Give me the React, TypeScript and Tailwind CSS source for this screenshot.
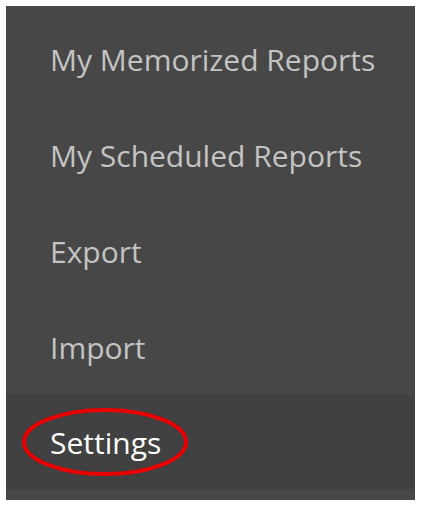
import React from 'react';

const items = ['My Memorized Reports', 'My Scheduled Reports', 'Export', 'Import'];

export default function App() {
  return (
    <div className="w-[423px] h-[508px] bg-white pt-[6px] pl-[6px]" style={{ fontFamily: '"Open Sans", sans-serif' }}>
      <div className="w-[409px] h-[494px] bg-[#474747] pt-[5px] flex flex-col">
        {items.map((label) => (
          <div key={label} className="h-[96px] flex items-center pl-[44px] text-[30px] text-[#c4c4c4]">
            {label}
          </div>
        ))}
        <div className="relative h-[95px] bg-[#414141] flex items-center pl-[44px] text-[30px] text-white">
          <span className="relative">Settings</span>
          <svg className="absolute left-[14px] top-[11px]" width="170" height="72" viewBox="0 0 170 72">
            <ellipse cx="85" cy="36" rx="81" ry="32" fill="none" stroke="#e80000" strokeWidth="4" />
          </svg>
        </div>
      </div>
    </div>
  );
}
